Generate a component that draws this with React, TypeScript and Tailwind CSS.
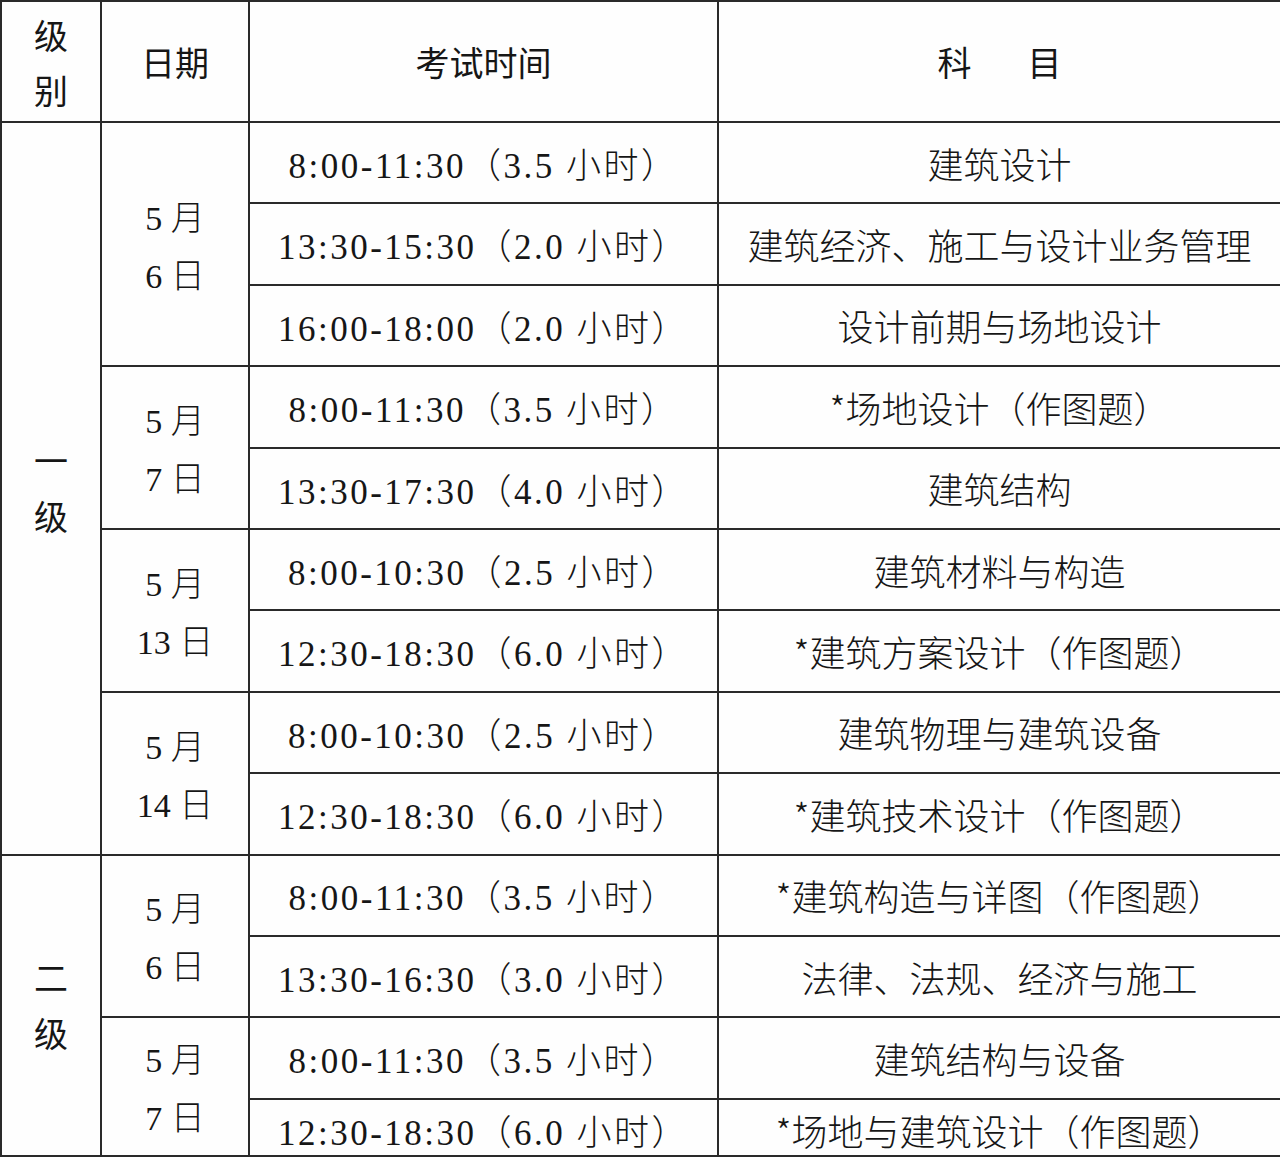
import React from 'react';

type Row = { time: string; subject: string };

type DateGroup = { month: string; day: string; rows: Row[] };

type Level = { name: [string, string]; dates: DateGroup[] };

const levels: Level[] = [
  {
    name: ['一', '级'],
    dates: [
      {
        month: '5',
        day: '6',
        rows: [
          { time: '8:00-11:30（3.5 小时）', subject: '建筑设计' },
          { time: '13:30-15:30（2.0 小时）', subject: '建筑经济、施工与设计业务管理' },
          { time: '16:00-18:00（2.0 小时）', subject: '设计前期与场地设计' },
        ],
      },
      {
        month: '5',
        day: '7',
        rows: [
          { time: '8:00-11:30（3.5 小时）', subject: '*场地设计（作图题）' },
          { time: '13:30-17:30（4.0 小时）', subject: '建筑结构' },
        ],
      },
      {
        month: '5',
        day: '13',
        rows: [
          { time: '8:00-10:30（2.5 小时）', subject: '建筑材料与构造' },
          { time: '12:30-18:30（6.0 小时）', subject: '*建筑方案设计（作图题）' },
        ],
      },
      {
        month: '5',
        day: '14',
        rows: [
          { time: '8:00-10:30（2.5 小时）', subject: '建筑物理与建筑设备' },
          { time: '12:30-18:30（6.0 小时）', subject: '*建筑技术设计（作图题）' },
        ],
      },
    ],
  },
  {
    name: ['二', '级'],
    dates: [
      {
        month: '5',
        day: '6',
        rows: [
          { time: '8:00-11:30（3.5 小时）', subject: '*建筑构造与详图（作图题）' },
          { time: '13:30-16:30（3.0 小时）', subject: '法律、法规、经济与施工' },
        ],
      },
      {
        month: '5',
        day: '7',
        rows: [
          { time: '8:00-11:30（3.5 小时）', subject: '建筑结构与设备' },
          { time: '12:30-18:30（6.0 小时）', subject: '*场地与建筑设计（作图题）' },
        ],
      },
    ],
  },
];

const serif = "font-['Liberation_Serif','Noto_Sans_CJK_SC',serif]";
const sans = "font-['Noto_Sans_CJK_SC','Liberation_Sans',sans-serif]";
const cell = 'border-2 border-[#2a2a2a] text-center align-middle p-0';

export default function App() {
  const totalRows = levels.reduce(
    (n, l) => n + l.dates.reduce((m, d) => m + d.rows.length, 0),
    0
  );
  let rowIndex = 0;

  return (
    <div className="w-[1280px] h-[1157px] overflow-hidden bg-[#fefefe] text-[#161616]">
      <table className="w-[1280px] table-fixed border-collapse border-2 border-[#2a2a2a]">
        <colgroup>
          <col className="w-[100px]" />
          <col className="w-[148px]" />
          <col className="w-[469px]" />
          <col className="w-[563px]" />
        </colgroup>
        <thead>
          <tr className={`h-[121px] ${sans} text-[34px]`}>
            <th className={`${cell} font-normal leading-[55px]`}>
              级<br />别
            </th>
            <th className={`${cell} font-normal`}>日期</th>
            <th className={`${cell} font-normal`}>考试时间</th>
            <th className={`${cell} font-normal`}>
              <span className="tracking-[56px] pl-[56px]">科目</span>
            </th>
          </tr>
        </thead>
        <tbody>
          {levels.map((level) => {
            const levelSpan = level.dates.reduce((m, d) => m + d.rows.length, 0);
            return level.dates.map((date, di) =>
              date.rows.map((row, ri) => {
                rowIndex += 1;
                const isLast = rowIndex === totalRows;
                return (
                  <tr
                    key={`${level.name[0]}-${di}-${ri}`}
                    className={isLast ? 'h-[57px]' : 'h-[81.4px]'}
                  >
                    {di === 0 && ri === 0 && (
                      <td
                        rowSpan={levelSpan}
                        className={`${cell} ${sans} text-[34px] leading-[56px]`}
                      >
                        {level.name[0]}
                        <br />
                        {level.name[1]}
                      </td>
                    )}
                    {ri === 0 && (
                      <td
                        rowSpan={date.rows.length}
                        className={`${cell} ${serif} text-[34px] font-light leading-[55px] pt-[3px]`}
                      >
                        <div>
                          {date.month} <span className={sans}>月</span>
                        </div>
                        <div>
                          {date.day} <span className={sans}>日</span>
                        </div>
                      </td>
                    )}
                    <td
                      className={`${cell} ${serif} text-[35px] font-light tracking-[2.5px] ${
                        isLast ? 'leading-[36px] pt-[14px]' : 'pt-[9px]'
                      }`}
                    >
                      {row.time}
                    </td>
                    <td
                      className={`${cell} ${sans} text-[36px] font-light ${
                        isLast ? 'leading-[36px] pt-[6px]' : ''
                      }`}
                    >
                      {row.subject}
                    </td>
                  </tr>
                );
              })
            );
          })}
        </tbody>
      </table>
    </div>
  );
}
